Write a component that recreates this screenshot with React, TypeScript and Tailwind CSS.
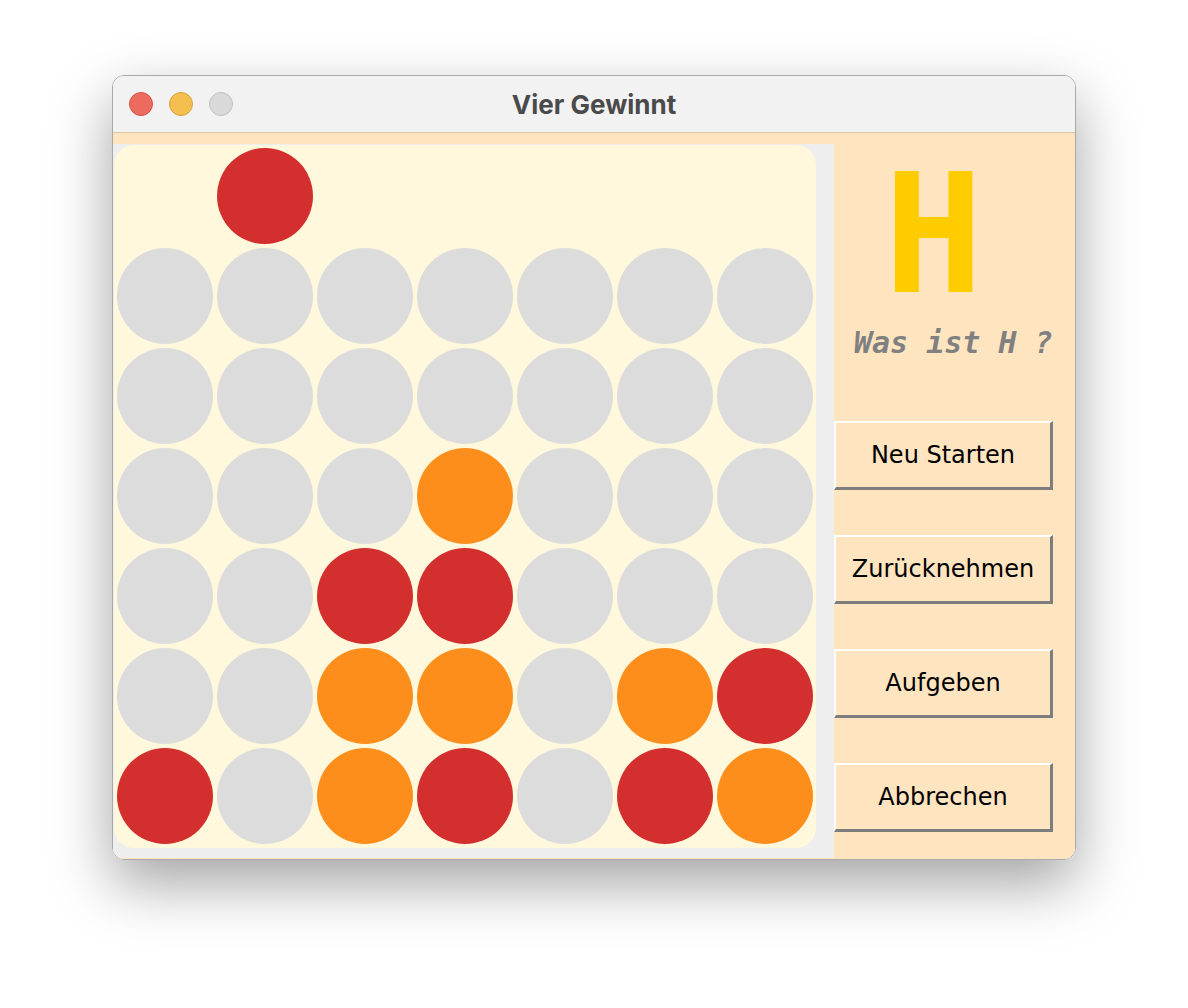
type Cell = "" | "g" | "r" | "o";

const rows: Cell[][] = [
  ["", "r", "", "", "", "", ""],
  ["g", "g", "g", "g", "g", "g", "g"],
  ["g", "g", "g", "g", "g", "g", "g"],
  ["g", "g", "g", "o", "g", "g", "g"],
  ["g", "g", "r", "r", "g", "g", "g"],
  ["g", "g", "o", "o", "g", "o", "r"],
  ["r", "g", "o", "r", "g", "r", "o"],
];

const discColor: Record<Cell, string> = {
  "": "",
  g: "bg-[#dcdcdc]",
  r: "bg-[#d32f2f]",
  o: "bg-[#fe8e1c]",
};

function Disc({ kind }: { kind: Cell }) {
  return (
    <div className="w-[100px] h-[100px] flex items-center justify-center">
      {kind && <div className={`w-[96px] h-[96px] rounded-full ${discColor[kind]}`}></div>}
    </div>
  );
}

function PanelButton({ label }: { label: string }) {
  return (
    <button
      className="w-[219px] h-[69px] bg-[#ffe4c0] border-t-2 border-l-2 border-b-[3px] border-r-[3px] border-t-white border-l-white border-b-[#7d7d7d] border-r-[#7d7d7d] text-black text-[24px] flex items-center justify-center"
      style={{ fontFamily: '"DejaVu Sans", "Liberation Sans", sans-serif' }}
    >
      {label}
    </button>
  );
}

function TrafficLights() {
  return (
    <div className="flex items-center gap-[16px]">
      <div className="w-[24px] h-[24px] rounded-full bg-[#ec6a5e] border border-[#d35347]"></div>
      <div className="w-[24px] h-[24px] rounded-full bg-[#f4bf4f] border border-[#d6a23c]"></div>
      <div className="w-[24px] h-[24px] rounded-full bg-[#d9d9d9] border border-[#c2c2c2]"></div>
    </div>
  );
}

export default function App() {
  return (
    <div className="w-[1188px] h-[1008px] bg-white pl-[112px] pt-[75px]">
      <div className="w-[964px] h-[785px] rounded-[12px] overflow-hidden border border-[#a9a9a9] shadow-[0_24px_60px_rgba(0,0,0,0.36)] flex flex-col">
        <div className="h-[57px] bg-[#f2f2f2] border-b border-[#dcc7a4] relative flex items-center px-[16px]">
          <TrafficLights />
          <div
            className="absolute inset-0 flex items-center justify-center text-[26px] font-bold text-[#4a4a4a]"
            style={{ fontFamily: 'Inter, "Liberation Sans", sans-serif' }}
          >
            Vier Gewinnt
          </div>
        </div>
        <div className="flex-1 bg-[#ffe4c0] pt-[11px] flex">
          <div className="w-[721px] h-[714px] bg-[#eeeeee] pl-[1px] pt-[1px]">
            <div className="w-[702px] h-[703px] bg-[#fff8dc] rounded-[20px] pt-[1px] pl-[1px]">
              {rows.map((row, i) => (
                <div key={i} className="flex">
                  {row.map((c, j) => (
                    <Disc key={j} kind={c} />
                  ))}
                </div>
              ))}
            </div>
          </div>
          <div className="flex-1 flex flex-col">
            <div
              className="ml-[50px] mt-[9px] text-[165px] leading-none font-bold text-[#ffcc00]"
              style={{ fontFamily: '"DejaVu Sans Mono", "Liberation Mono", monospace' }}
            >
              H
            </div>
            <div
              className="ml-[20px] mt-[10px] text-[30px] leading-none font-bold italic text-[#808080] whitespace-pre"
              style={{ fontFamily: '"DejaVu Sans Mono", "Liberation Mono", monospace' }}
            >
              Was ist H ?
            </div>
            <div className="mt-[63px] flex flex-col gap-[45px]">
              <PanelButton label="Neu Starten" />
              <PanelButton label="Zurücknehmen" />
              <PanelButton label="Aufgeben" />
              <PanelButton label="Abbrechen" />
            </div>
          </div>
        </div>
      </div>
    </div>
  );
}
